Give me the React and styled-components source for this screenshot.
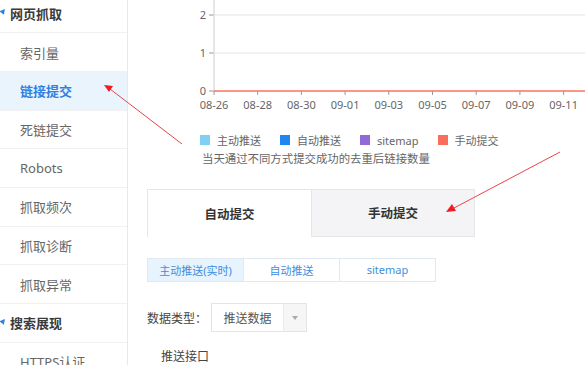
import React from 'react';
import styled, { createGlobalStyle } from 'styled-components';

const GlobalStyle = createGlobalStyle`
  html, body {
    margin: 0;
    padding: 0;
    background: #fff;
    overflow: hidden;
  }
  body {
    font-family: "Noto Sans", "Noto Sans CJK SC", sans-serif;
  }
`;

// page frame, cut at the bottom like the screenshot
const Page = styled.div`
  position: relative;
  display: flex;
  width: 586px;
  height: 365px;
  overflow: hidden;
  background: #fff;
`;

const Sidebar = styled.ul`
  list-style: none;
  margin: -5.4px 0 0 0;
  padding: 0;
  width: 128px;
  flex: none;
  border-right: 1px solid #e8e8e8;
  box-sizing: border-box;
`;

const NavItem = styled.li`
  height: 38.7px;
  display: flex;
  align-items: center;
  box-sizing: border-box;
  padding-left: ${props => (props.head ? '10px' : '20px')};
  border-bottom: 1px solid #f1f1f1;
  font-size: 13px;
  white-space: nowrap;
  font-weight: ${props => (props.head || props.active ? 700 : 400)};
  color: ${props => (props.active ? '#2f80e0' : props.head ? '#3a3a3a' : '#666')};
  background: ${props => (props.active ? '#eaf4fd' : '#fff')};
  position: relative;
`;

const Caret = styled.span`
  position: absolute;
  left: 0;
  top: 50%;
  margin-top: -3px;
  width: 0;
  height: 0;
  border-left: 3px solid transparent;
  border-right: 3px solid transparent;
  border-top: 5px solid #2f80e0;
  transform: rotate(-20deg);
`;

const Main = styled.div`
  flex: 1;
  display: flex;
  flex-direction: column;
  min-width: 0;
`;

const ChartBox = styled.div`
  height: 118px;
  flex: none;
`;

const Legend = styled.div`
  display: flex;
  gap: 19px;
  padding-left: 72px;
  margin-top: 14px;
  height: 16px;
  align-items: center;
`;

const LegendItem = styled.div`
  display: flex;
  align-items: center;
  gap: 7px;
  font-size: 11px;
  color: #666;
`;

const Swatch = styled.span`
  width: 10px;
  height: 10px;
  background: ${props => props.color};
  display: inline-block;
`;

const Caption = styled.div`
  padding-left: 74px;
  margin-top: 3px;
  font-size: 11.4px;
  color: #666;
  line-height: 16px;
  white-space: nowrap;
`;

const Tabs = styled.div`
  display: flex;
  margin: 22px 0 0 19px;
  height: 53px;
`;

const Tab = styled.div`
  width: 164px;
  box-sizing: border-box;
  display: flex;
  align-items: center;
  justify-content: center;
  font-size: 12.5px;
  font-weight: 700;
  color: #333;
  background: ${props => (props.active ? '#fff' : '#f4f4f6')};
  border: 1px solid #e6e6e6;
  border-bottom: ${props => (props.active ? 'none' : '1px solid #e6e6e6')};
  border-right: ${props => (props.active ? 'none' : '1px solid #e6e6e6')};
`;

const SubTabs = styled.div`
  display: flex;
  margin: 21px 0 0 20px;
  height: 27px;
`;

const SubTab = styled.div`
  width: 97px;
  box-sizing: border-box;
  display: flex;
  align-items: center;
  justify-content: center;
  font-size: 11px;
  white-space: nowrap;
  color: #3d8fe0;
  background: ${props => (props.active ? '#e7f3fd' : '#fff')};
  border: 1px solid #e1e8ef;
  margin-left: -1px;
`;

const FormRow = styled.div`
  display: flex;
  align-items: center;
  margin: 21px 0 0 19px;
  gap: 6px;
`;

const Label = styled.span`
  width: 58px;
  font-size: 12px;
  color: #444;
  white-space: nowrap;
`;

const Select = styled.div`
  display: flex;
  width: 96px;
  height: 29px;
  box-sizing: border-box;
  border: 1px solid #e4e4e4;
`;

const SelectValue = styled.div`
  flex: 1;
  display: flex;
  align-items: center;
  justify-content: center;
  font-size: 12px;
  color: #555;
  white-space: nowrap;
`;

const SelectArrow = styled.div`
  width: 22px;
  background: #f6f6f6;
  border-left: 1px solid #ececec;
  display: flex;
  align-items: center;
  justify-content: center;
  &::after {
    content: '';
    border-left: 3px solid transparent;
    border-right: 3px solid transparent;
    border-top: 4px solid #aaa;
  }
`;

const SectionTitle = styled.div`
  margin: 15px 0 0 33px;
  font-size: 12px;
  color: #444;
  white-space: nowrap;
`;

const Overlay = styled.svg`
  position: absolute;
  left: 0;
  top: 0;
  pointer-events: none;
`;

const navItems = [
  { label: '网页抓取', head: true },
  { label: '索引量' },
  { label: '链接提交', active: true },
  { label: '死链提交' },
  { label: 'Robots' },
  { label: '抓取频次' },
  { label: '抓取诊断' },
  { label: '抓取异常' },
  { label: '搜索展现', head: true },
  { label: 'HTTPS认证' },
];

const dates = ['08-26', '08-28', '08-30', '09-01', '09-03', '09-05', '09-07', '09-09', '09-11'];

const legend = [
  { label: '主动推送', color: '#7fd0f5' },
  { label: '自动推送', color: '#1f87ef' },
  { label: 'sitemap', color: '#9068d8' },
  { label: '手动提交', color: '#fb6e5b' },
];

function Chart() {
  const x0 = 86;
  const step = 43.7;
  const rows = [
    { v: '2', y: 15 },
    { v: '1', y: 53 },
    { v: '0', y: 91 },
  ];
  return (
    <svg width="457" height="118" viewBox="0 0 457 118">
      {rows.map(r => (
        <g key={r.v}>
          {r.v !== '0' && <line x1={x0} y1={r.y} x2="457" y2={r.y} stroke="#eeeeee" strokeWidth="1.5" />}
          <line x1={x0 - 5} y1={r.y} x2={x0} y2={r.y} stroke="#999" strokeWidth="1" />
          <text x={x0 - 8} y={r.y + 4} fontSize="11" fill="#666" textAnchor="end" fontFamily="Noto Sans, sans-serif">{r.v}</text>
        </g>
      ))}
      <line x1={x0} y1="0" x2={x0} y2="91" stroke="#d6d6d6" strokeWidth="1.2" />
      {dates.map((d, i) => (
        <g key={d}>
          <line x1={x0 + i * step} y1="91" x2={x0 + i * step} y2="95" stroke="#999" strokeWidth="1" />
          <text x={x0 + i * step} y="109" fontSize="11" fill="#666" textAnchor="middle" fontFamily="Noto Sans, sans-serif">{d}</text>
        </g>
      ))}
      <line x1={x0} y1="91" x2="457" y2="91" stroke="#f3755f" strokeWidth="1.6" />
    </svg>
  );
}

export default function App() {
  return (
    <>
      <GlobalStyle />
      <Page>
        <Sidebar>
          {navItems.map(item => (
            <NavItem key={item.label} head={item.head} active={item.active}>
              {item.head && <Caret />}
              {item.label}
            </NavItem>
          ))}
        </Sidebar>
        <Main>
          <ChartBox>
            <Chart />
          </ChartBox>
          <Legend>
            {legend.map(l => (
              <LegendItem key={l.label}>
                <Swatch color={l.color} />
                {l.label}
              </LegendItem>
            ))}
          </Legend>
          <Caption>当天通过不同方式提交成功的去重后链接数量</Caption>
          <Tabs>
            <Tab active>自动提交</Tab>
            <Tab>手动提交</Tab>
          </Tabs>
          <SubTabs>
            <SubTab active>主动推送(实时)</SubTab>
            <SubTab>自动推送</SubTab>
            <SubTab>sitemap</SubTab>
          </SubTabs>
          <FormRow>
            <Label>数据类型：</Label>
            <Select>
              <SelectValue>推送数据</SelectValue>
              <SelectArrow />
            </Select>
          </FormRow>
          <SectionTitle>推送接口</SectionTitle>
        </Main>
        <Overlay width="586" height="376" viewBox="0 0 586 376">
          <line x1="182" y1="144" x2="110" y2="89" stroke="#e8454a" strokeWidth="1" />
          <polygon points="104,85 113,86 109,92" fill="#ee1c25" />
          <line x1="560" y1="152" x2="454" y2="208" stroke="#e8454a" strokeWidth="1" />
          <polygon points="446,212 452,204 456,211" fill="#ee1c25" />
        </Overlay>
      </Page>
    </>
  );
}
